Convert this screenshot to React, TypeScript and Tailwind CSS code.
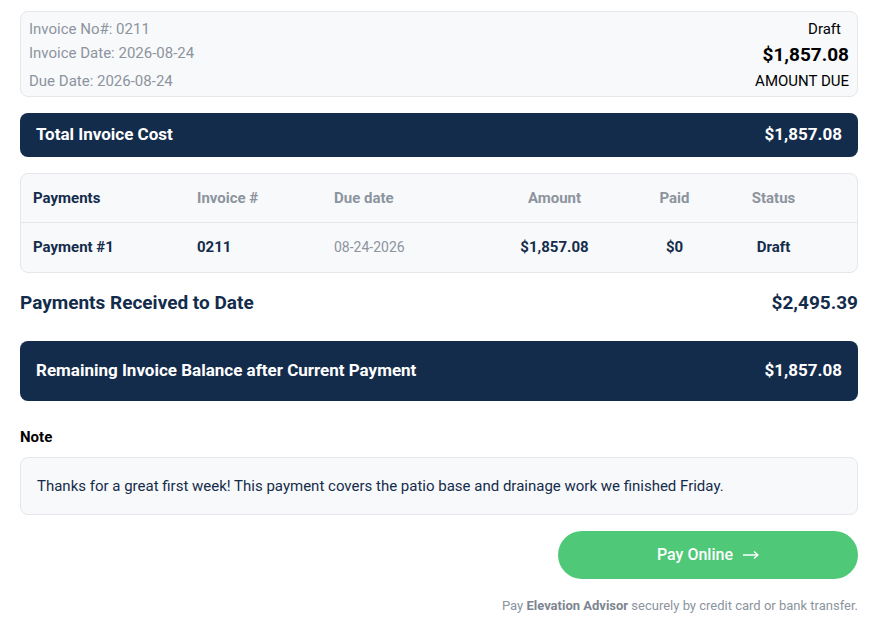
import React from 'react';

const navy = 'text-[#142c4b]';

const rows = [
  { name: 'Payment #1', invoice: '0211', due: '08-24-2026', amount: '$1,857.08', paid: '$0', status: 'Draft' },
];

const ArrowRight = () => (
  <svg width="16" height="10" viewBox="0 0 16 10" fill="none" stroke="currentColor" strokeWidth="1.3">
    <path d="M0 5h15M11 1.5 15 5l-4 3.5" />
  </svg>
);

const InvoiceSummary = () => {
  return (
    <div className="min-h-screen bg-white font-['Roboto',sans-serif] pl-5 pr-[22px] pt-[11px] pb-6">
      {/* header card */}
      <div className="flex justify-between rounded-lg border border-gray-200 bg-[#f8f9fb] pl-2 pr-2 pt-[7px] pb-[5px]">
        <div className="flex flex-col text-[15px] text-[#8c949e]">
          <span className="leading-[20px]">Invoice No#: 0211</span>
          <span className="mt-[4px] leading-[20px]">Invoice Date: 2026-08-24</span>
          <span className="mt-[8px] leading-[20px]">Due Date: 2026-08-24</span>
        </div>
        <div className="flex flex-col items-end text-[15px] text-black">
          <span className="pr-2 leading-[20px]">Draft</span>
          <span className="mt-[4px] text-[19px] font-bold leading-[24px]">$1,857.08</span>
          <span className="mt-[4px] leading-[20px]">AMOUNT DUE</span>
        </div>
      </div>

      {/* total */}
      <div className="mt-[16px] flex h-[44px] items-center justify-between rounded-lg bg-[#142c4b] px-4 text-[17px] font-bold text-white">
        <span>Total Invoice Cost</span>
        <span>$1,857.08</span>
      </div>

      {/* payments table */}
      <div className="mt-[16px] overflow-hidden rounded-lg border border-gray-200 bg-[#f8f9fb]">
        <div className="grid h-[49px] grid-cols-[164px_137px_154px_133px_107px_1fr] items-center border-b border-gray-200 px-3 text-[15px] font-bold text-[#8c949e]">
          <span className={navy}>Payments</span>
          <span>Invoice #</span>
          <span>Due date</span>
          <span className="text-center">Amount</span>
          <span className="text-center">Paid</span>
          <span className="text-center pr-[26px]">Status</span>
        </div>
        {rows.map((r) => (
          <div
            key={r.name}
            className={`grid h-[49px] grid-cols-[164px_137px_154px_133px_107px_1fr] items-center px-3 text-[15px] font-bold ${navy}`}
          >
            <span>{r.name}</span>
            <span>{r.invoice}</span>
            <span className="text-[14px] font-normal text-[#8c949e]">{r.due}</span>
            <span className="text-center">{r.amount}</span>
            <span className="text-center">{r.paid}</span>
            <span className="text-center pr-[26px]">{r.status}</span>
          </div>
        ))}
      </div>

      {/* received */}
      <div className={`mt-[16px] flex items-center justify-between text-[19px] font-bold ${navy}`}>
        <span>Payments Received to Date</span>
        <span>$2,495.39</span>
      </div>

      {/* remaining */}
      <div className="mt-[23px] flex h-[60px] items-center justify-between rounded-lg bg-[#142c4b] px-4 text-[17px] font-bold text-white">
        <span>Remaining Invoice Balance after Current Payment</span>
        <span>$1,857.08</span>
      </div>

      {/* note */}
      <div className="mt-[25px] text-[15px] font-bold text-black">Note</div>
      <div className={`mt-[9px] flex h-[58px] items-center rounded-lg border border-gray-200 bg-[#f8f9fb] px-4 text-[15px] ${navy}`}>
        Thanks for a great first week! This payment covers the patio base and drainage work we finished Friday.
      </div>

      {/* pay */}
      <div className="mt-[16px] flex flex-col items-end">
        <button className="flex h-[48px] w-[300px] items-center justify-center gap-[10px] rounded-full bg-[#4fc878] text-[16px] font-medium text-white">
          Pay Online <ArrowRight />
        </button>
        <p className="mt-[17px] text-[13px] text-[#8c949e]">
          Pay <span className="font-bold text-[#7d8690]">Elevation Advisor</span> securely by credit card or bank transfer.
        </p>
      </div>
    </div>
  );
};

export default InvoiceSummary;
